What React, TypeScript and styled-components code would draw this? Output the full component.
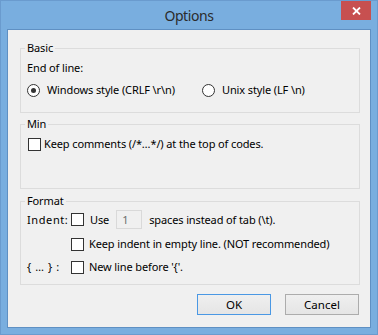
import styled, { createGlobalStyle } from 'styled-components';

const GlobalStyle = createGlobalStyle`
    html, body {
        margin: 0;
        padding: 0;
    }
    body {
        width: 378px;
        height: 335px;
        overflow: hidden;
        font-family: "Noto Sans", "Open Sans", sans-serif;
        font-size: 11px;
        letter-spacing: -0.12px;
        color: #000;
        white-space: nowrap;
    }
`;

const Style = {
    Window: styled.div`
        width: 378px;
        height: 335px;
        box-sizing: border-box;
        border: 1px solid #6a9bce;
        background: #79aedf;
        display: flex;
        flex-direction: column;
    `,
    TitleBar: styled.div`
        height: 28px;
        display: grid;
        grid-template-columns: 1fr auto 1fr;
        align-items: start;
    `,
    Title: styled.div`
        grid-column: 2;
        font-size: 14px;
        letter-spacing: -0.4px;
        line-height: 30px;
        color: #2b2b2b;
    `,
    Close: styled.div`
        grid-column: 3;
        justify-self: end;
        margin-right: 6px;
        width: 30px;
        height: 19px;
        background: #c75050;
        display: flex;
        align-items: center;
        justify-content: center;
    `,
    Client: styled.div`
        flex: 1;
        margin: 0 6px 6px;
        border: 1px solid #5f90c3;
        background: #f0f0f0;
        padding: 10px 10px 0 12px;
        display: flex;
        flex-direction: column;
    `,
    Group: styled.fieldset<{ $top: number; $padTop: number; $padBottom: number }>`
        margin: ${(p) => p.$top}px 0 0;
        min-inline-size: auto;
        border: 1px solid #dcdcdc;
        padding: ${(p) => p.$padTop}px 6px ${(p) => p.$padBottom}px;
        display: flex;
        flex-direction: column;
    `,
    Legend: styled.legend`
        padding: 0 2px;
        margin-left: -2px;
        line-height: 16px;
    `,
    Line: styled.div`
        line-height: 16px;
    `,
    RadioRow: styled.div`
        margin-top: 6px;
        display: flex;
        height: 16px;
        align-items: center;
    `,
    Option: styled.label<{ $width?: number }>`
        display: flex;
        align-items: center;
        gap: 7px;
        width: ${(p) => (p.$width ? `${p.$width}px` : 'auto')};
        line-height: 16px;
    `,
    Radio: styled.span<{ $checked?: boolean }>`
        width: 13px;
        height: 13px;
        box-sizing: border-box;
        border: 1px solid #333;
        border-radius: 50%;
        background: #fff;
        display: flex;
        align-items: center;
        justify-content: center;
        &::after {
            content: '';
            width: 5px;
            height: 5px;
            border-radius: 50%;
            background: ${(p) => (p.$checked ? '#333' : 'transparent')};
        }
    `,
    Check: styled.label<{ $gap: number; $indent?: number }>`
        display: flex;
        align-items: center;
        gap: ${(p) => p.$gap}px;
        margin-left: ${(p) => p.$indent ?? 0}px;
        line-height: 16px;
        height: 16px;
    `,
    Box: styled.span`
        width: 13px;
        height: 13px;
        box-sizing: border-box;
        border: 1px solid #333;
        background: #fff;
        flex: none;
    `,
    FormatGrid: styled.div`
        display: grid;
        grid-template-columns: 44px 1fr;
        grid-template-rows: 19px 16px 16px;
        row-gap: 7px;
        align-items: center;
    `,
    RowLabel: styled.span`
        line-height: 16px;
        grid-column: 1;
        letter-spacing: 0.6px;
    `,
    RowBody: styled.div`
        grid-column: 2;
        display: flex;
        align-items: center;
        line-height: 16px;
    `,
    Spin: styled.span`
        width: 26px;
        height: 19px;
        box-sizing: border-box;
        border: 1px solid #d9d9d9;
        background: #f0f0f0;
        color: #6d6d6d;
        padding-left: 5px;
        line-height: 17px;
        margin: 0 7px;
    `,
    Buttons: styled.div`
        margin: 9px 1px 0 0;
        display: flex;
        justify-content: flex-end;
        gap: 14px;
    `,
    Button: styled.button<{ $default?: boolean }>`
        width: 74px;
        height: 21px;
        box-sizing: border-box;
        border: 1px solid ${(p) => (p.$default ? '#4a98e4' : '#acacac')};
        background: linear-gradient(#efefef, #e5e5e5);
        font-family: inherit;
        font-size: 11.5px;
        color: #000;
        padding: 0;
        line-height: 19px;
    `,
};

const App = () => {
    return (
        <>
            <GlobalStyle />
            <Style.Window>
                <Style.TitleBar>
                    <Style.Title>Options</Style.Title>
                    <Style.Close>
                        <svg width="9" height="8" viewBox="0 0 9 8">
                            <path d="M1 0.5 L8 7.5 M8 0.5 L1 7.5" stroke="#fff" strokeWidth="1.8" />
                        </svg>
                    </Style.Close>
                </Style.TitleBar>
                <Style.Client>
                    <Style.Group $top={0} $padTop={4} $padBottom={14}>
                        <Style.Legend>Basic</Style.Legend>
                        <Style.Line>End of line:</Style.Line>
                        <Style.RadioRow>
                            <Style.Option $width={175}>
                                <Style.Radio $checked />
                                {'Windows style (CRLF \\r\\n)'}
                            </Style.Option>
                            <Style.Option>
                                <Style.Radio />
                                {'Unix style (LF \\n)'}
                            </Style.Option>
                        </Style.RadioRow>
                    </Style.Group>
                    <Style.Group $top={3} $padTop={4} $padBottom={36}>
                        <Style.Legend>Min</Style.Legend>
                        <Style.Check $gap={3} $indent={1}>
                            <Style.Box />
                            Keep comments (/*…*/) at the top of codes.
                        </Style.Check>
                    </Style.Group>
                    <Style.Group $top={4} $padTop={1} $padBottom={9}>
                        <Style.Legend>Format</Style.Legend>
                        <Style.FormatGrid>
                            <Style.RowLabel>Indent:</Style.RowLabel>
                            <Style.RowBody>
                                <Style.Check $gap={6}>
                                    <Style.Box />
                                    Use
                                </Style.Check>
                                <Style.Spin>1</Style.Spin>
                                {'spaces instead of tab (\\t).'}
                            </Style.RowBody>
                            <Style.RowBody>
                                <Style.Check $gap={5}>
                                    <Style.Box />
                                    Keep indent in empty line. (NOT recommended)
                                </Style.Check>
                            </Style.RowBody>
                            <Style.RowLabel>{'{ … } :'}</Style.RowLabel>
                            <Style.RowBody>
                                <Style.Check $gap={5}>
                                    <Style.Box />
                                    {"New line before '{'."}
                                </Style.Check>
                            </Style.RowBody>
                        </Style.FormatGrid>
                    </Style.Group>
                    <Style.Buttons>
                        <Style.Button $default>OK</Style.Button>
                        <Style.Button>Cancel</Style.Button>
                    </Style.Buttons>
                </Style.Client>
            </Style.Window>
        </>
    );
};

export default App;
